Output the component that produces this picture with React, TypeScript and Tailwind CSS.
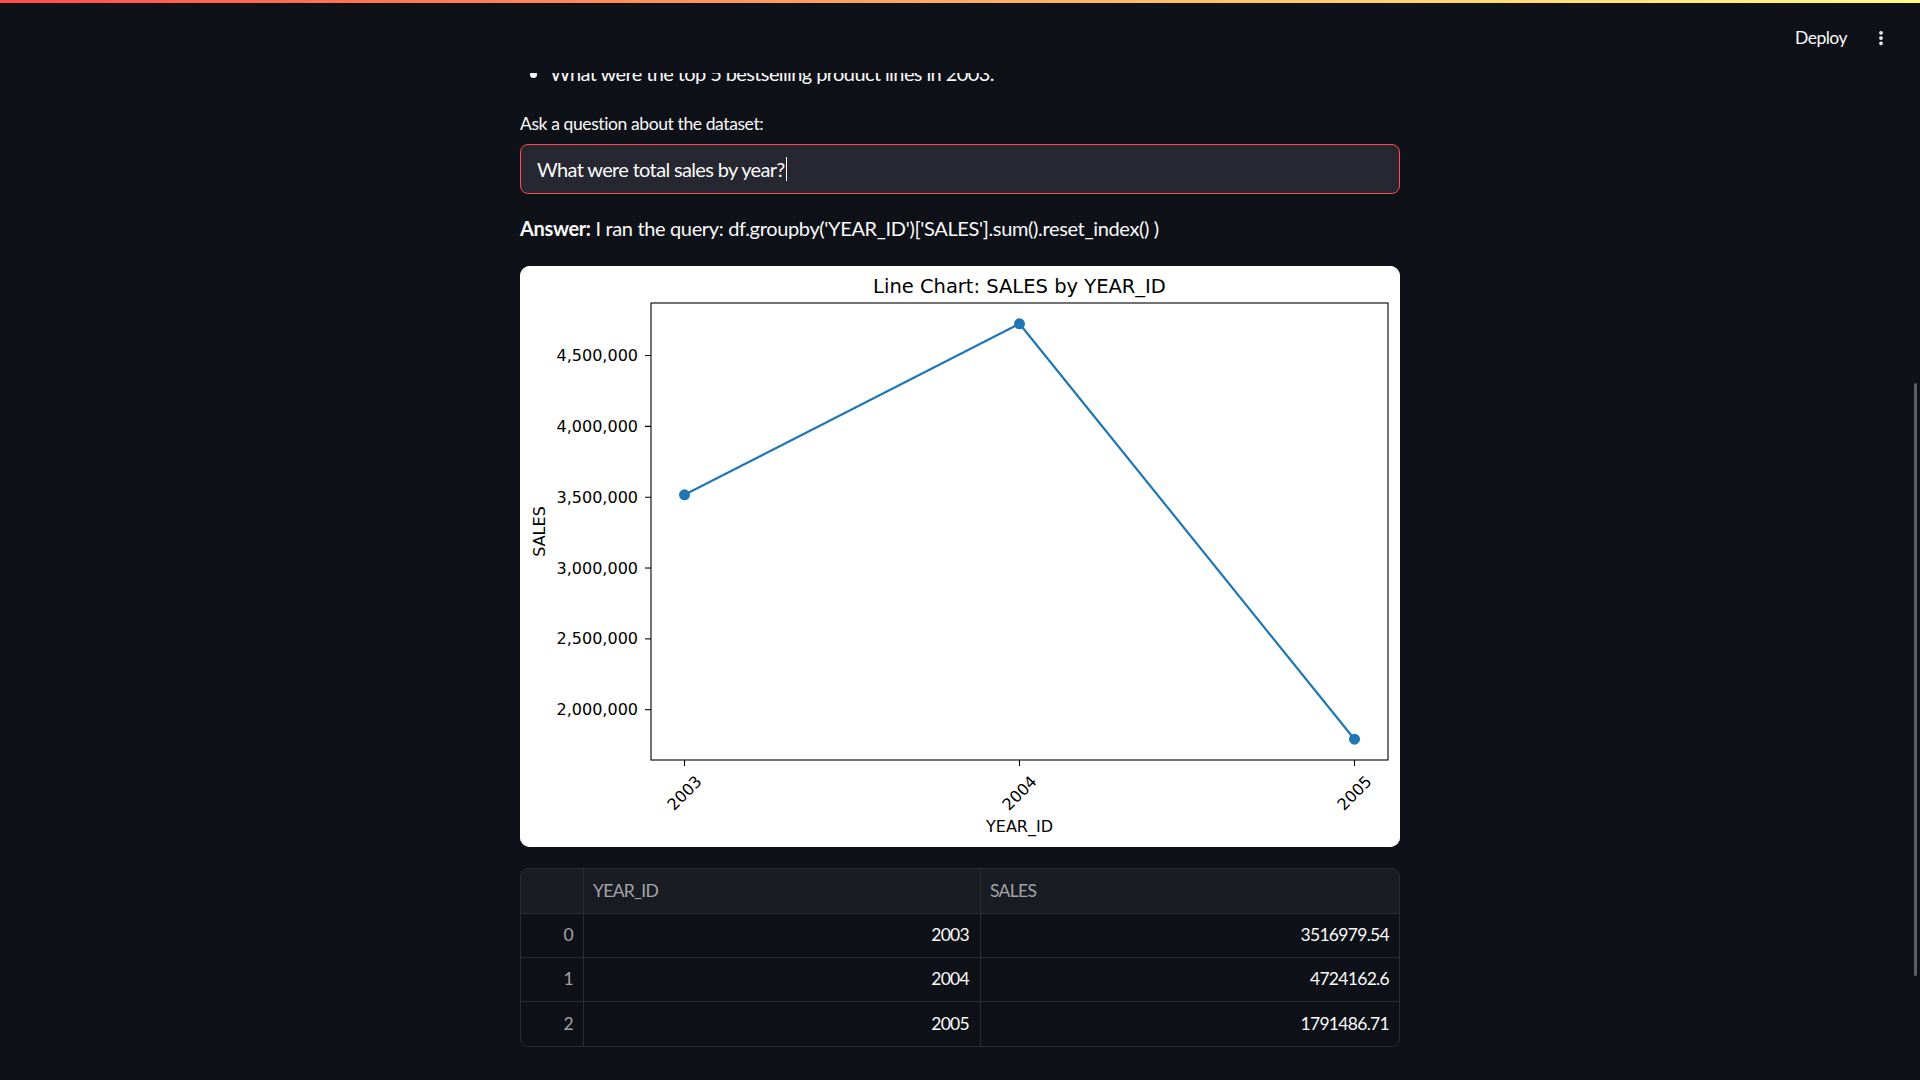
import { MoreVertical } from 'lucide-react';

const sansFont = "font-['Lato','Noto_Sans',sans-serif]";

const data = [
  { year: 2003, sales: 3516979.54 },
  { year: 2004, sales: 4724162.6 },
  { year: 2005, sales: 1791486.71 },
];

// plot area inside the 880x581 figure
const AX = { l: 131, r: 868, t: 37, b: 494 };
const Y_MIN = 1644853;
const Y_MAX = 4870796;
const sx = (x: number) => AX.l + ((x - 2002.9) / 2.2) * (AX.r - AX.l);
const sy = (v: number) => AX.b - ((v - Y_MIN) / (Y_MAX - Y_MIN)) * (AX.b - AX.t);
const yTicks = [2000000, 2500000, 3000000, 3500000, 4000000, 4500000];

function SalesChart() {
  const pts = data.map((d) => `${sx(d.year)},${sy(d.sales)}`).join(' ');
  return (
    <svg width={880} height={581} viewBox="0 0 880 581" className="block tracking-normal">
      <rect x={0} y={0} width={880} height={581} fill="#ffffff" />
      <text
        x={499.5}
        y={27}
        textAnchor="middle"
        fontFamily="DejaVu Sans"
        fontSize={19.5}
        fill="#000"
      >
        Line Chart: SALES by YEAR_ID
      </text>
      <rect
        x={AX.l}
        y={AX.t}
        width={AX.r - AX.l}
        height={AX.b - AX.t}
        fill="none"
        stroke="#000"
        strokeWidth={1.1}
      />
      {yTicks.map((v) => (
        <g key={v}>
          <line x1={AX.l - 6} x2={AX.l} y1={sy(v)} y2={sy(v)} stroke="#000" strokeWidth={1.1} />
          <text
            x={AX.l - 13}
            y={sy(v)}
            textAnchor="end"
            dominantBaseline="central"
            fontFamily="DejaVu Sans"
            fontSize={16}
            fill="#000"
          >
            {v.toLocaleString('en-US')}
          </text>
        </g>
      ))}
      {data.map((d) => (
        <g key={d.year}>
          <line x1={sx(d.year)} x2={sx(d.year)} y1={AX.b} y2={AX.b + 6} stroke="#000" strokeWidth={1.1} />
          <text
            transform={`translate(${sx(d.year)} 527) rotate(-45)`}
            textAnchor="middle"
            dominantBaseline="central"
            fontFamily="DejaVu Sans"
            fontSize={16}
            fill="#000"
          >
            {d.year}
          </text>
        </g>
      ))}
      <text
        x={499.5}
        y={560}
        textAnchor="middle"
        dominantBaseline="central"
        fontFamily="DejaVu Sans"
        fontSize={16}
        fill="#000"
      >
        YEAR_ID
      </text>
      <text
        transform="translate(19 265.5) rotate(-90)"
        textAnchor="middle"
        dominantBaseline="central"
        fontFamily="DejaVu Sans"
        fontSize={16}
        fill="#000"
      >
        SALES
      </text>
      <polyline points={pts} fill="none" stroke="#1f77b4" strokeWidth={2.2} strokeLinejoin="round" />
      {data.map((d) => (
        <circle key={d.year} cx={sx(d.year)} cy={sy(d.sales)} r={5.5} fill="#1f77b4" />
      ))}
    </svg>
  );
}

function ResultTable() {
  return (
    <div className="border border-[#2a2c33] rounded-[8px] overflow-hidden text-[17.5px] tracking-[-0.7px]">
      <div className="grid grid-cols-[63px_397px_1fr] h-[45px] bg-[#1a1c23] border-b border-[#2a2c33] text-[#a3a4a8]">
        <div className="border-r border-[#2a2c33]" />
        <div className="border-r border-[#2a2c33] flex items-center pl-[9px]">YEAR_ID</div>
        <div className="flex items-center pl-[9px]">SALES</div>
      </div>
      {data.map((d, i) => (
        <div
          key={d.year}
          className={`grid grid-cols-[63px_397px_1fr] h-[44px] text-[#fafafa] ${
            i < data.length - 1 ? 'border-b border-[#2a2c33]' : ''
          }`}
        >
          <div className="border-r border-[#2a2c33] flex items-center justify-end pr-[10px] text-[#a3a4a8]">{i}</div>
          <div className="border-r border-[#2a2c33] flex items-center justify-end pr-[11px]">{d.year}</div>
          <div className="flex items-center justify-end pr-[10px]">{d.sales}</div>
        </div>
      ))}
    </div>
  );
}

export default function App() {
  return (
    <div className={`min-h-screen bg-[#0e1117] text-[#fafafa] ${sansFont}`}>
      {/* header overlay */}
      <header className="fixed top-0 left-0 right-0 h-[73px] bg-[#0e1117] z-10">
        <div className="h-[3px] bg-gradient-to-r from-[#ff4b4b] to-[#fffd80]" />
        <div className="flex justify-end items-center h-[24px] mt-[23px] pr-[30px]">
          <span className="text-[17.5px] leading-[24px] tracking-[-0.5px]">Deploy</span>
          <MoreVertical className="w-[18px] h-[18px] ml-[25px]" strokeWidth={3} />
        </div>
      </header>

      {/* scrollbar thumb */}
      <div className="fixed right-[3px] top-[383px] w-[3px] h-[593px] rounded-full bg-[#5c5e63]" />

      <main className="w-[880px] mx-auto pt-[57px] pb-[35px]">
        <ul className="pl-[30px] list-disc text-[20px] leading-[32px] tracking-[-0.6px]">
          <li>What were the top 5 bestselling product lines in 2003.</li>
        </ul>

        <label className="block mt-[21px] text-[17.5px] leading-[28px] tracking-[-0.4px]">
          Ask a question about the dataset:
        </label>

        <div className="mt-[6px] h-[50px] rounded-[8px] border border-[#ff4b4b] bg-[#262730] flex items-center px-[16px]">
          <span className="text-[20px] tracking-[-0.65px]">What were total sales by year?</span>
          <span className="w-px h-[24px] bg-[#fafafa] ml-[1px]" />
        </div>

        <p className="mt-[18px] text-[20px] leading-[32px] tracking-[-0.35px]">
          <b className="font-bold">Answer:</b> I ran the query: df.groupby('YEAR_ID')['SALES'].sum().reset_index() )
        </p>

        <div className="mt-[22px] bg-white rounded-[10px] overflow-hidden">
          <SalesChart />
        </div>

        <div className="mt-[21px]">
          <ResultTable />
        </div>
      </main>
    </div>
  );
}
